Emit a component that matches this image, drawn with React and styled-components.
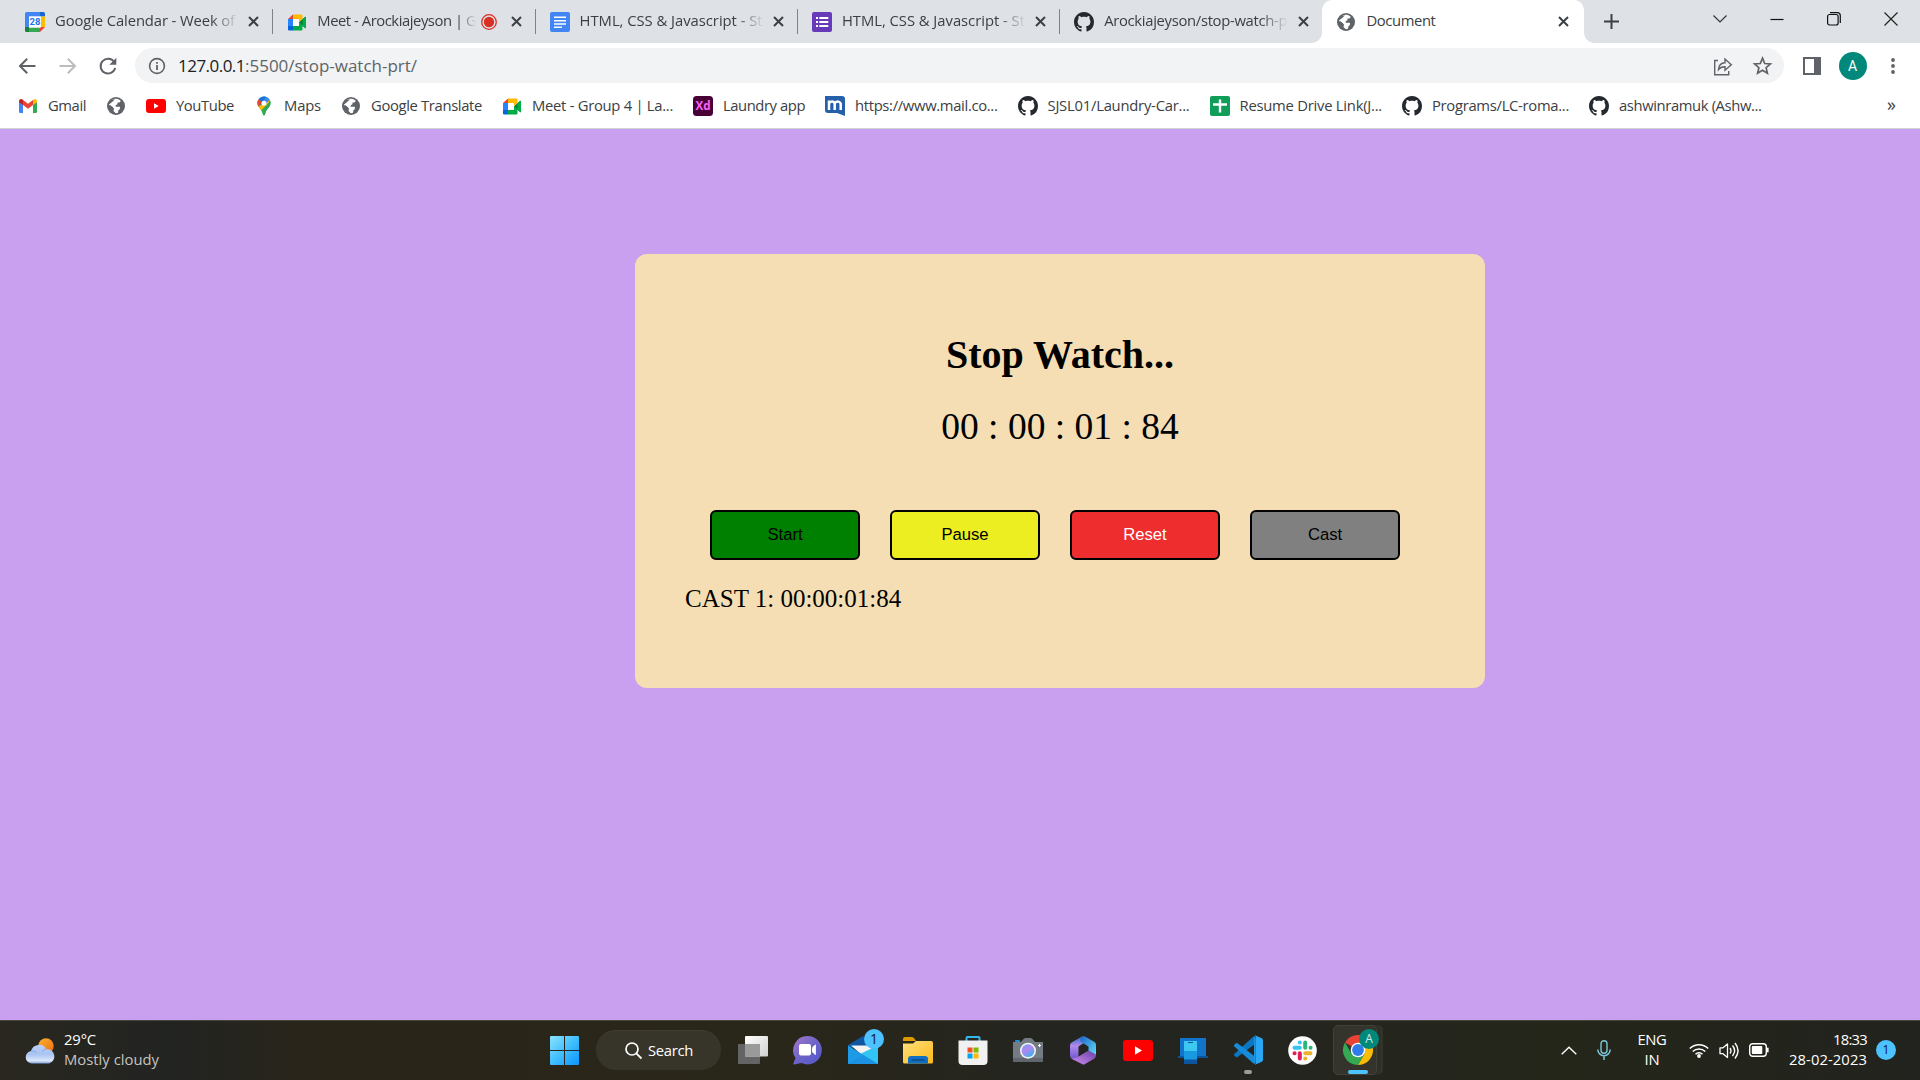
import React, { useLayoutEffect, useRef } from "react";
import styled, { createGlobalStyle } from "styled-components";

const ui = `"Open Sans", "Noto Sans", "Liberation Sans", sans-serif`;

const Global = createGlobalStyle`
  * { box-sizing: border-box; }
  html, body { margin: 0; padding: 0; }
  body { width: 1920px; height: 1080px; overflow: hidden; }
  svg { display: block; flex: none; overflow: visible; }
`;

const Screen = styled.div`
  width: 1920px;
  height: 1080px;
  display: flex;
  flex-direction: column;
  font-family: ${ui};
`;

/* Tracked label: spreads or tightens its letters to a given width. */
const Label = styled.span`
  display: block;
  flex: none;
  white-space: nowrap;
  margin: ${(p) => (p.$size ? "0" : "-1px 0 1px")};
  font-size: ${(p) => p.$size || 14.8}px;
  line-height: 20px;
  color: ${(p) => p.$color || "#3c4043"};
`;

function Fit({ w, children, ...rest }) {
  const ref = useRef(null);
  useLayoutEffect(() => {
    const el = ref.current;
    el.style.width = "max-content";
    const natural = el.getBoundingClientRect().width;
    el.style.letterSpacing = (w - natural) / children.length + "px";
    el.style.width = w + "px";
  }, [w, children]);
  return <Label ref={ref} {...rest}>{children}</Label>;
}

/* ---------- tab strip ---------- */
const TabStrip = styled.div`
  height: 43px;
  background: #dee1e6;
  display: flex;
  padding-left: 11px;
`;

const Tab = styled.div`
  position: relative;
  width: ${(p) => (p.$active ? 262 : 262.3)}px;
  height: 43px;
  padding-left: 14px;
  display: flex;
  align-items: center;
  background: ${(p) => (p.$active ? "#fff" : "transparent")};
  border-radius: 10px 10px 0 0;
  &::before, &::after {
    content: "";
    display: ${(p) => (p.$active ? "block" : "none")};
    position: absolute;
    bottom: 0;
    width: 10px;
    height: 10px;
  }
  &::before { left: -10px; background: radial-gradient(circle at 0 0, transparent 9.5px, #fff 10px); }
  &::after { right: -10px; background: radial-gradient(circle at 100% 0, transparent 9.5px, #fff 10px); }
`;

const TabTitle = styled.div`
  display: flex;
  width: ${(p) => p.$w}px;
  margin-left: 10px;
  margin-top: -2px;
  -webkit-mask-image: ${(p) => (p.$fade ? `linear-gradient(90deg, #000 calc(100% - ${p.$fade}px), transparent)` : "none")};
`;

const TabRight = styled.div`
  flex: 1;
  display: flex;
  align-items: center;
  justify-content: flex-end;
  gap: 14px;
  padding-right: ${(p) => (p.$active ? 15 : 13)}px;
`;

const Divider = styled.div`
  width: 1px;
  height: 25px;
  background: #808387;
`;

const NewTab = styled.div`
  width: 55px;
  display: flex;
  align-items: center;
  justify-content: center;
`;

const WindowControls = styled.div`
  flex: 1;
  height: 37px;
  display: flex;
  justify-content: flex-end;
  align-items: center;
  gap: 43px;
  padding-right: 22px;
`;

/* ---------- toolbar ---------- */
const Toolbar = styled.div`
  height: 45px;
  background: #fff;
  display: flex;
  align-items: center;
  padding-left: 17px;
`;

const NavButtons = styled.div`
  width: 118px;
  display: flex;
  gap: 20.5px;
`;

const Omnibox = styled.div`
  width: 1649px;
  height: 35px;
  border-radius: 18px;
  background: #f1f3f4;
  display: flex;
  align-items: center;
  padding: 0 12px 0 13px;
`;

const Url = styled.div`
  flex: 1;
  display: flex;
  padding-left: 12px;
`;

const OmniActions = styled.div`
  display: flex;
  gap: 20px;
`;

const ToolbarEnd = styled.div`
  display: flex;
  align-items: center;
  padding-left: 19px;
`;

const Avatar = styled.div`
  width: 28px;
  height: 28px;
  margin: 0 24px 0 17.5px;
  border-radius: 50%;
  background: #00897b;
  color: #fff;
  font: 14px/28px Roboto, sans-serif;
  text-align: center;
`;

const Bookmarks = styled.div`
  height: 41px;
  padding: 0 24px 5px 18px;
  background: #fff;
  border-bottom: 1px solid #d0d2d6;
  display: flex;
  align-items: center;
  gap: 20px;
`;

const Bookmark = styled.div`
  display: flex;
  align-items: center;
  gap: 10px;
`;

const More = styled.div`
  margin-left: auto;
  margin-top: -4px;
  font-size: 18px;
  line-height: 18px;
  color: #3c4043;
`;

/* ---------- page ---------- */
const Page = styled.main`
  height: 891px;
  padding: 125px 0 0 635px;
  background: #c9a0ef;
`;

const Card = styled.section`
  width: 850px;
  height: 434px;
  border-radius: 12px;
  padding: 78px 50px 0;
  background: #f5deb3;
  color: #000;
  font-family: "Liberation Serif", serif;
  display: flex;
  flex-direction: column;
`;

const Heading = styled.h1`
  margin: 0;
  font-size: 40px;
  line-height: 46px;
  text-align: center;
`;

const Time = styled.div`
  margin-top: 27px;
  font-size: 37.5px;
  line-height: 44px;
  text-align: center;
`;

const Actions = styled.div`
  display: flex;
  gap: 30px;
  margin: 61px 0 0 25px;
`;

const Action = styled.button`
  width: 150px;
  height: 50px;
  padding: 0;
  border: 2px solid #000;
  border-radius: 6px;
  background: ${(p) => p.$bg};
  color: ${(p) => p.$fg || "#000"};
  font: 16.67px "Liberation Sans", sans-serif;
`;

const Cast = styled.div`
  margin-top: 24px;
  font-size: 25px;
  line-height: 30px;
`;

/* ---------- taskbar ---------- */
const Taskbar = styled.footer`
  height: 60px;
  border-top: 1px solid #48463f;
  background: linear-gradient(90deg, #29271f 0, #222422 170px, #2a2519 330px, #29261a 800px, #242520 1050px, #25251f 1300px, #24261a 1560px, #22231e 1920px);
  display: flex;
  align-items: center;
`;

const Weather = styled.div`
  width: 550px;
  padding-left: 25px;
  display: flex;
  align-items: center;
  gap: 9px;
`;

const Apps = styled.div`
  display: flex;
  align-items: center;
  width: 1005px;
`;

const AppSlot = styled.div`
  position: relative;
  width: 55px;
  height: 59px;
  padding-bottom: 1px;
  display: flex;
  align-items: center;
`;

const Search = styled.div`
  width: 125px;
  height: 40px;
  margin: 0 17px 1px;
  border-radius: 20px;
  background: #37342a;
  border-top: 1px solid #424036;
  display: flex;
  align-items: center;
  gap: 6px;
  padding-left: 29px;
`;

const Badge = styled.div`
  width: 20px;
  height: 20px;
  border-radius: 50%;
  background: ${(p) => p.$bg || "#4cc2ff"};
  color: ${(p) => p.$fg || "#10212b"};
  font-size: ${(p) => p.$size || 12}px;
  line-height: 20px;
  text-align: center;
`;

const OverBadge = styled(Badge)`
  position: absolute;
  left: ${(p) => p.$x}px;
  top: ${(p) => p.$y}px;
`;

const Running = styled.div`
  position: absolute;
  bottom: 6px;
  left: ${(p) => p.$x}px;
  width: ${(p) => p.$w}px;
  height: 4px;
  border-radius: 2px;
  background: ${(p) => p.$bg};
`;

const ActiveSlot = styled.div`
  position: relative;
  width: 44px;
  height: 50px;
  margin-left: -10px;
  border: 1px solid #41413a;
  border-radius: 5px;
  background: #34342d;
  display: flex;
  align-items: center;
  padding-left: 9px;
  box-shadow: 5px 0 0 -0.5px #2f2f29, 6px 0 0 -0.5px #3e3e37;
`;

const Tray = styled.div`
  flex: 1;
  display: flex;
  align-items: center;
`;

const Stack = styled.div`
  display: flex;
  flex-direction: column;
  align-items: ${(p) => p.$align || "flex-start"};
  width: ${(p) => p.$w || "auto"};
  margin-left: ${(p) => p.$ml || 0}px;
  margin-bottom: 1px;
`;

/* ---------- icons ---------- */
const I = ({ w = 20, h, vb, children, ...p }) => (
  <svg width={w} height={h || w} viewBox={vb || `0 0 ${w} ${h || w}`} fill="none" {...p}>{children}</svg>
);

const CalendarIcon = () => (
  <I>
    <path d="M1.5 0H15v4.500H4V15H0V1.5Q0 0 1.5 0Z" fill="#4285f4" />
    <path d="M15 0h3.500Q20 0 20 1.500V4.500h-5Z" fill="#1967d2" />
    <path d="M16 4.500h4V15h-4Z" fill="#fbbc04" />
    <path d="M4 15.500h11V20H4Z" fill="#34a853" />
    <path d="M0 15h4v5H1.500Q0 20 0 18.500Z" fill="#188038" />
    <path d="M15 15h5l-5 5Z" fill="#ea4335" />
    <path d="M4 4.500H16v11H4Z" fill="#fff" />
    <text x="10" y="13.300" textAnchor="middle" fontSize="9.500" fontWeight="700" fontFamily="Roboto, sans-serif" fill="#1a73e8">28</text>
  </I>
);
const MeetIcon = () => (
  <I>
    <path d="M6 2.500h8.300Q15.500 2.500 15.500 3.800V7L12 10V7H6Z" fill="#ffba00" />
    <path d="M6 2.500V7H1Z" fill="#ea4335" />
    <path d="M1 7h5v7H1Z" fill="#2684fc" />
    <path d="M1 14h5v4.500H2.300Q1 18.500 1 17.200Z" fill="#0066da" />
    <path d="M6 14h6v-4l3.500 3v4.200q0 1.300-1.200 1.300H6Z" fill="#00ac47" />
    <path d="M6 7h6v7H6Z" fill="#fff" />
    <path d="M12 10.300 18 5q1-.7 1 .5v10q0 1.200-1 .5Z" fill="#00832d" />
    <path d="M15.500 7.200 18 5q1-.7 1 .5v10q0 1.200-1 .5l-2.500-2.200Z" fill="#00ac47" />
  </I>
);
const RecIcon = () => (
  <I w={16}><circle cx="8" cy="8" r="7.300" stroke="#d93025" strokeWidth="1.300" /><circle cx="8" cy="8" r="5.200" fill="#d93025" /></I>
);
const DocsIcon = () => (
  <I><rect width="20" height="20" rx="2" fill="#4285f4" /><path d="M4 5.200h12M4 8.700h12M4 12h12M4 15.300h8" stroke="#fff" strokeWidth="1.600" /></I>
);
const FormsIcon = () => (
  <I><rect width="20" height="20" rx="2" fill="#673ab7" /><path d="M7.300 6h9M7.300 10h9M7.300 14h9" stroke="#fff" strokeWidth="2" /><path d="M4 6h2M4 10h2M4 14h2" stroke="#fff" strokeWidth="2" /></I>
);
const GithubIcon = () => (
  <I vb="0 0 16 16"><path fill="#24292f" d="M8 0C3.580 0 0 3.580 0 8c0 3.540 2.290 6.530 5.470 7.590.4.070.55-.17.55-.38 0-.19-.01-.82-.01-1.490-2.010.37-2.530-.49-2.690-.94-.09-.23-.48-.94-.82-1.130-.28-.15-.68-.52-.01-.53.630-.01 1.080.58 1.230.82.72 1.210 1.870.87 2.330.66.070-.52.280-.87.510-1.070-1.780-.2-3.640-.89-3.640-3.950 0-.87.310-1.590.82-2.150-.08-.2-.36-1.020.08-2.120 0 0 .67-.21 2.200.82.640-.18 1.320-.27 2-.27s1.360.09 2 .27c1.530-1.040 2.200-.82 2.200-.82.440 1.100.16 1.920.08 2.120.510.56.82 1.270.82 2.150 0 3.070-1.870 3.750-3.650 3.950.29.25.54.73.54 1.480 0 1.070-.01 1.930-.01 2.200 0 .21.150.46.55.38A8.010 8.010 0 0 0 16 8c0-4.420-3.580-8-8-8Z" /></I>
);
const GlobeIcon = () => (
  <I>
    <circle cx="10" cy="10" r="9" fill="#5f6368" />
    <path d="M10.500 2.800c2 .2 3.200 1 4.300 2.200l-1.300 1.500h-2v1.700L9.700 9.300v1.500h4.200v2.200l-1.500 1.300-.4 2.400-1.800.6c-3-.2-5.300-2-6.500-4.300h3.400v-1.400L4.700 9.800 3 9c.3-3.700 3-6.200 7.500-6.200Z" fill="#fff" />
    <path d="M3 8.500 6.700 5.500 9 3.200 5.500 3.800 2.800 6.500ZM4 9l4 3.500-.5 2.500 3 3-4-1-3.500-4Z" fill="#5f6368" />
  </I>
);
const CloseIcon = () => <I w={11}><path d="m1 1 9 9M10 1l-9 9" stroke="#3c4043" strokeWidth="2" /></I>;
const PlusIcon = () => <I w={15}><path d="M7.500 0v15M0 7.500h15" stroke="#3c4043" strokeWidth="2" /></I>;

const BackIcon = ({ c = "#5f6368", flip }) => (
  <I><path transform={flip ? "matrix(-1 0 0 1 20 0)" : undefined} d="M18.500 10H3.500M10.200 2.800 3 10l7.200 7.200" stroke={c} strokeWidth="2" /></I>
);
const ReloadIcon = () => (
  <I><path d="M16.200 6A7.400 7.400 0 1 0 17.200 12" stroke="#5f6368" strokeWidth="2" /><path d="M18.300 1.700v7h-7Z" fill="#5f6368" /></I>
);
const InfoIcon = () => (
  <I w={18}><circle cx="9" cy="9" r="7.400" stroke="#5f6368" strokeWidth="1.600" /><path d="M9 8v5M9 5v1.800" stroke="#5f6368" strokeWidth="1.800" /></I>
);
const ShareIcon = () => (
  <I><path d="M5 4.500H1.700v14.300h14V15M5.500 13.500c.3-4.500 2.500-6.500 6.500-6.700V3l6.300 5.700-6.300 5.500v-3.500c-3-.1-5 .8-6.500 2.800Z" stroke="#5f6368" strokeWidth="1.400" transform="translate(1 0)" /></I>
);
const StarIcon = () => (
  <I><path d="m10 2.200 2.200 5.300 5.700.5-4.300 3.700 1.300 5.600L10 14.300l-4.900 3 1.300-5.600L2.100 8l5.700-.5Z" stroke="#5f6368" strokeWidth="1.700" transform="translate(.5 0)" /></I>
);
const SideIcon = () => (
  <I w={18}><path d="M1 1h16v16H1Z" stroke="#5f6368" strokeWidth="2" /><path d="M11 1h6v16h-6Z" fill="#5f6368" /></I>
);
const DotsIcon = () => (
  <I w={4} h={16}><g fill="#5f6368"><circle cx="2" cy="2" r="1.900" /><circle cx="2" cy="8" r="1.900" /><circle cx="2" cy="14" r="1.900" /></g></I>
);

const GmailIcon = () => (
  <I>
    <path d="M1 5.500v10Q1 17 2.300 17H5V8Z" fill="#4285f4" />
    <path d="M15 8v9h2.700q1.300 0 1.300-1.500v-10Z" fill="#34a853" />
    <path d="M1 5.500C1 3 3 2.400 4.600 3.600L5 4v5L1 6.300Z" fill="#c5221f" />
    <path d="M15 4c2-1.800 4-.7 4 1.500v.8L15 9Z" fill="#fbbc04" />
    <path d="M5 4l5 3.800L15 4v5l-5 3.800L5 9Z" fill="#ea4335" />
  </I>
);
const YoutubeIcon = ({ w = 20, h = 14, vb = "0 0 20 14", r = 3 }) => (
  <I w={w} h={h} vb={vb}><rect width="20" height="14" rx={r} fill="#f00" /><path d="M8 4.200v5.600L12.700 7Z" fill="#fff" /></I>
);
const MapsIcon = () => (
  <I>
    <path d="M10 .5a6.600 6.600 0 0 1 6.600 6.600c0 4.300-4.600 5.600-5.600 11.400q-1 2-2 0C8 13 3.400 11.300 3.400 7.100A6.600 6.600 0 0 1 10 .5Z" fill="#34a853" />
    <path d="M4.700 3.200 8.200 6 4.500 10.700C3.200 8.500 2.800 5.500 4.700 3.200Z" fill="#ea4335" />
    <path d="M4.700 3.200C6.500.7 9.500 0 12.200 1L8 5.900Z" fill="#1a73e8" />
    <path d="M12.200 1c2 .8 3.300 2 4 4L8.500 14 5 11.400Z" fill="#4285f4" />
    <path d="M8 8.800l-3.700 1.800L8 15.500l8-8.500-.7-3-4.200 5Z" fill="#fbbc04" />
    <path d="M16.200 5c1.300 4-1.500 6.200-3.200 8.600-1.200 1.700-1.600 3.200-2 4.900q-1 2-2 0c-.3-1.600-.8-3-1.600-4.200Z" fill="#34a853" />
    <circle cx="10" cy="7.200" r="2.500" fill="#fff" />
  </I>
);
const XdIcon = () => (
  <I><rect width="20" height="20" rx="3.500" fill="#470137" /><text x="10" y="14" textAnchor="middle" fontSize="11.500" fontWeight="700" fontFamily="Open Sans, sans-serif" fill="#ff61f6" textLength="15" lengthAdjust="spacingAndGlyphs">Xd</text></I>
);
const MailComIcon = () => (
  <I>
    <path d="M0 0h17q3 0 3 3v17l-8-3H3q-3 0-3-3Z" fill="#2560a8" />
    <path d="M4 14V4.500M4 7.500q1-2 3-2t2.700 2V14M9.700 7.500q1-2 3-2t3 2V14" stroke="#fff" strokeWidth="2.500" />
  </I>
);
const SheetIcon = () => (
  <I><rect width="20" height="20" rx="2" fill="#0f9d58" /><path d="M10 3.500v13M3 8.500h14" stroke="#fff" strokeWidth="2.400" /></I>
);

const WeatherIcon = () => (
  <I w={30} h={26}>
    <defs>
      <linearGradient id="sun" x1="0" y1="0" x2="1" y2="1"><stop stopColor="#f9b233" /><stop offset="1" stopColor="#ee6c10" /></linearGradient>
      <linearGradient id="cloud" x1="0" y1="0" x2="0" y2="1"><stop stopColor="#b9d0f8" /><stop offset=".5" stopColor="#a9c4f2" /><stop offset=".85" stopColor="#dbe8fb" /><stop offset="1" stopColor="#7fa2dc" /></linearGradient>
    </defs>
    <circle cx="21" cy="8" r="7.700" fill="url(#sun)" />
    <path d="M6.500 25.500a6.300 6.300 0 0 1-.5-12.500 8.300 8.300 0 0 1 15.300-1.800 7.300 7.300 0 0 1 2.700 14.300Z" fill="url(#cloud)" />
    <path d="M6 13q3-.5 5.500 1.500M17 13.500q2-2.400 4.300-2.300" stroke="#86a8e4" strokeWidth="1" />
  </I>
);
const WinIcon = () => (
  <I w={29}>
    <defs><linearGradient id="win" x1="0" y1="0" x2="29" y2="29" gradientUnits="userSpaceOnUse"><stop stopColor="#8be3ff" /><stop offset=".5" stopColor="#41bfff" /><stop offset="1" stopColor="#0a94ff" /></linearGradient></defs>
    <path d="M1 0h13v14H0V1Q0 0 1 0ZM15 0h13q1 0 1 1v13H15ZM0 15h14v14H1q-1 0-1-1ZM15 15h14v13q0 1-1 1H15Z" fill="url(#win)" />
  </I>
);
const SearchIcon = () => <I w={17}><circle cx="7" cy="7" r="6" stroke="#fff" strokeWidth="1.700" /><path d="m11.300 11.300 5.200 5.200" stroke="#fff" strokeWidth="1.900" /></I>;
const TaskViewIcon = () => (
  <I w={30} h={28}>
    <defs><linearGradient id="tv" x1="0" y1="0" x2="1" y2="1"><stop stopColor="#fff" /><stop offset="1" stopColor="#d0d0d0" /></linearGradient></defs>
    <rect y="8" width="22" height="20" rx="1" fill="#646464" />
    <rect x="7" width="23" height="20.500" rx="1" fill="url(#tv)" />
    <path d="M7 8h15v12.500H7Z" fill="#9a9a9a" />
  </I>
);
const ChatIcon = () => (
  <I w={29}>
    <defs><linearGradient id="chat" x1="0" y1="0" x2="1" y2="1"><stop stopColor="#a578c8" /><stop offset=".5" stopColor="#6d64c8" /><stop offset="1" stopColor="#4f57c9" /></linearGradient></defs>
    <path d="M14.500 0a14.200 14.200 0 1 1-6 27L1 28.500q-1 0-.7-1L2.500 22A14.200 14.200 0 0 1 14.500 0Z" fill="url(#chat)" />
    <rect x="6" y="8" width="12" height="11.500" rx="2" fill="#fff" /><path d="M19 12.500q0-.8.6-1.400l2.500-2.300q.8-.6.8.4v9.100q0 1-.8.4l-2.500-2.300q-.6-.6-.6-1.400Z" fill="#fff" />
  </I>
);
const MailIcon = () => (
  <I w={30} h={28}>
    <path d="M0 9 15 0l15 9v3H0Z" fill="#0f559f" />
    <path d="M3 9.500h24L15 20Z" fill="#f4f4f4" />
    <path d="M30 9.500V28H24L13 17.500Z" fill="#32c5f4" />
    <path d="M0 9.500 30 28H0Z" fill="#1e9be6" />
    <path d="M15 19 30 28H0Z" fill="#1b92e2" />
  </I>
);
const FolderIcon = () => (
  <I w={30} h={27}>
    <defs><linearGradient id="fold" x1="0" y1="0" x2="1" y2="1"><stop stopColor="#ffe07a" /><stop offset="1" stopColor="#fbb91c" /></linearGradient></defs>
    <path d="M0 2q0-2 2-2h7q1.500 0 2.300 1.500L13 4H0Z" fill="#dd9b00" />
    <path d="M0 6.500h10L13 4h15q2 0 2 2v19q0 1.500-1.500 1.500h-27Q0 26.500 0 25Z" fill="url(#fold)" />
    <path d="M5 26.500V22q0-3 3-3h14q3 0 3 3v4.500Z" fill="#0f6fc0" /><path d="M8.500 23h13" stroke="#0a3f79" strokeWidth="1.200" />
  </I>
);
const StoreIcon = () => (
  <I w={30} h={29}>
    <path d="M8.500 6V2q0-1 1-1h11q1 0 1 1v4" stroke="#35b7ee" strokeWidth="2" />
    <path d="M.5 4.500h29V25q0 4-4 4h-21q-4 0-4-4Z" fill="#f1f1f1" />
    <path d="M9.500 11.500h5v5h-5Z" fill="#f25022" /><path d="M15.500 11.500h5v5h-5Z" fill="#7fba00" /><path d="M9.500 17.500h5v5h-5Z" fill="#00a4ef" /><path d="M15.500 17.500h5v5h-5Z" fill="#ffb900" />
  </I>
);
const CameraIcon = () => (
  <I w={30} h={24}>
    <defs><linearGradient id="lens" x1="0" y1="0" x2=".7" y2="1"><stop stopColor="#58a6f8" /><stop offset=".45" stopColor="#b586f0" /><stop offset="1" stopColor="#3fb0f2" /></linearGradient></defs>
    <rect x="2" y="2" width="5" height="4" rx="1" fill="#1b8fd2" />
    <path d="M0 4h8l2.500-3q1-1 2-1h5q1 0 2 1L22 4h8v20H0Z" fill="#747b82" />
    <path d="M0 20h30v4H0Z" fill="#5f666d" />
    <circle cx="15" cy="12.700" r="8" fill="#f0f2f4" /><circle cx="15" cy="12.700" r="6.400" fill="url(#lens)" />
    <path d="M26.500 6v3M25 7.500h3" stroke="#fff" strokeWidth="1" />
  </I>
);
const OfficeIcon = () => (
  <I w={30} h={29}>
    <defs>
      <linearGradient id="o1" x1="0" y1="0" x2="0" y2="1"><stop stopColor="#2c6fc4" /><stop offset=".4" stopColor="#b28bea" /><stop offset="1" stopColor="#6a52cc" /></linearGradient>
      <linearGradient id="o2" x1="0" y1="0" x2="1" y2="1"><stop stopColor="#1c64c8" /><stop offset="1" stopColor="#63e0fa" /></linearGradient>
      <linearGradient id="o3" x1="0" y1="1" x2="1" y2="0"><stop stopColor="#cf8ff2" /><stop offset="1" stopColor="#6a3fa6" /></linearGradient>
    </defs>
    <path d="M14 .5 3.500 6.500Q2 7.500 2 9.500v10q0 2 1.500 3l3 1.500 4-3.500V10.500L18 5.500Z" fill="url(#o1)" />
    <path d="M14 .5q1.500-.7 3 0l9.500 5.500Q28 7 28 9v11l-7.500-4.500v-5L13 6Q11 3 14 .5Z" fill="url(#o2)" />
    <path d="M3 22.500q4 .5 7.500-2l10-6L28 18.500q0 3-1.500 4l-9.500 5.500q-1.500 1-3 0Z" fill="url(#o3)" />
  </I>
);
const PhoneIcon = () => (
  <I w={30} h={27}>
    <path d="M2 1h26v19H2Z" fill="#1173c9" /><path d="M0 19h30v1q0 1-1 1H1q-1 0-1-1Z" fill="#0b539a" />
    <path d="M6 4h13v22H6Z" fill="#1a98e0" /><path d="M6 4h13v10H6Z" fill="#3cc8f0" /><path d="M6 22.500h13V27H6Z" fill="#0b569e" /><path d="M10 5.500h5" stroke="#0b539a" />
  </I>
);
const CodeIcon = () => (
  <I w={30} h={30}>
    <path d="M21 1 1.300 19q-.8.8 0 1.500l1.700 1.600q.7.500 1.500 0L22 9Z" fill="#0b76c1" />
    <path d="M21 29 1.300 11.400q-.8-.8 0-1.600L3 8.200q.7-.5 1.500 0L22 21.500Z" fill="#178ad8" />
    <path d="M21.500 0 28.800 3.300Q30 4 30 5.200v19.700q0 1.200-1.200 1.800L21.500 30q1.200-.8 1.200-2.500v-25Q22.700.8 21.500 0Z" fill="#2aa7f3" />
    <path d="m21 1 1.700 2v24L21 29Z" fill="#1f95e2" />
  </I>
);
const SlackIcon = () => (
  <I w={29}>
    <circle cx="14.500" cy="14.500" r="14.300" fill="#fff" />
    <g strokeWidth="4" strokeLinecap="round">
      <path d="M11.800 6.500h.1M6.500 11.800h5.300" stroke="#36c5f0" /><path d="M22.500 11.800h.1M17.200 6.500v5.300" stroke="#2eb67d" />
      <path d="M17.200 22.500h.1M17.200 17.200h5.300" stroke="#ecb22e" /><path d="M6.500 17.200h.1M11.800 17.200v5.300" stroke="#e01e5a" />
    </g>
  </I>
);
const ChromeIcon = () => (
  <I w={30}>
    <path d="M15 15 2 7.500A15 15 0 0 1 28 7.500H15Z" fill="#ea4335" />
    <path d="M15 15V7.500h13A15 15 0 0 1 15 30l6.500-11.200Z" fill="#fbbc05" />
    <path d="M15 15l6.500 3.800L15 30A15 15 0 0 1 2 7.500l6.500 11.300Z" fill="#34a853" />
    <circle cx="15" cy="15" r="7.300" fill="#fff" /><circle cx="15" cy="15" r="5.900" fill="#2f7bea" />
  </I>
);
const Chevron = () => <I w={16} h={9}><path d="m.7 8.300 7.300-7 7.300 7" stroke="#fff" strokeWidth="1.400" /></I>;
const MicIcon = () => <I w={14} h={20}><rect x="4" y=".7" width="6" height="12.500" rx="3" stroke="#7cc6d8" strokeWidth="1.400" /><path d="M.8 9.500a6.200 6.200 0 0 0 12.400 0M7 16v4" stroke="#7cc6d8" strokeWidth="1.500" /></I>;
const WifiIcon = () => (
  <I w={20} h={15}><path d="M.8 5.500a13 13 0 0 1 18.400 0M3.700 8.500a9 9 0 0 1 12.600 0M6.500 11.300a5 5 0 0 1 7 0" stroke="#fff" strokeWidth="1.500" /><circle cx="10" cy="13" r="1.900" fill="#fff" /></I>
);
const VolumeIcon = () => (
  <I w={20} h={17}><path d="M1 5.800h3L8.500 2v13.500L4 11.700H1Z" stroke="#fff" strokeWidth="1.300" strokeLinejoin="round" /><path d="M11 6q2 2.500 0 5.500M13.500 3.500q4.200 5 0 10.500M16 1q6 7.500 0 15.500" stroke="#fff" strokeWidth="1.400" /></I>
);
const BatteryIcon = () => (
  <I w={20} h={14}><rect x=".7" y=".7" width="16.600" height="12.600" rx="3" stroke="#fff" strokeWidth="1.400" /><rect x="2.800" y="3" width="10.500" height="8" rx="1" fill="#fff" /><path d="M18.500 4.700v4.600" stroke="#fff" strokeWidth="2.200" /></I>
);

const tabs = [
  { icon: <CalendarIcon />, title: "Google Calendar - Week of", w: 180 },
  { icon: <MeetIcon />, title: "Meet - Arockiajeyson | G", w: 159, rec: true },
  { icon: <DocsIcon />, title: "HTML, CSS & Javascript - St", w: 183 },
  { icon: <FormsIcon />, title: "HTML, CSS & Javascript - St", w: 183 },
  { icon: <GithubIcon />, title: "Arockiajeyson/stop-watch-p", w: 183 },
  { icon: <GlobeIcon />, title: "Document", w: 69, active: true },
];

const bookmarks = [
  [<GmailIcon />, "Gmail", 38], [<GlobeIcon />], [<YoutubeIcon />, "YouTube", 58], [<MapsIcon />, "Maps", 37],
  [<GlobeIcon />, "Google Translate", 111], [<MeetIcon />, "Meet - Group 4 | La...", 141], [<XdIcon />, "Laundry app", 82],
  [<MailComIcon />, "https://www.mail.co...", 142.5], [<GithubIcon />, "SJSL01/Laundry-Car...", 142],
  [<SheetIcon />, "Resume Drive Link(J...", 142.5], [<GithubIcon />, "Programs/LC-roma...", 137], [<GithubIcon />, "ashwinramuk (Ashw...", 142.5],
];

export default function App() {
  return (
    <>
      <Global />
      <Screen>
        <TabStrip>
          {tabs.map((t, i) => (
            <Tab key={i} $active={t.active}>
              {t.icon}
              <TabTitle $w={t.rec ? 159 : 184} $fade={t.active ? 0 : t.rec ? 18 : 28}><Fit w={t.w}>{t.title}</Fit></TabTitle>
              <TabRight $active={t.active}>{t.rec && <RecIcon />}<CloseIcon /></TabRight>
              {i < 4 && <Divider />}
            </Tab>
          ))}
          <NewTab><PlusIcon /></NewTab>
          <WindowControls>
            <I w={14} h={8}><path d="m.5.500 6.500 6.500 6.500-6.500" stroke="#333" strokeWidth="1.200" /></I>
            <I w={14} h={14}><path d="M.5 7.500h13" stroke="#111" strokeWidth="1.200" /></I>
            <I w={14} h={14}><rect x=".6" y="2.500" width="10.500" height="10.500" rx="2" stroke="#111" strokeWidth="1.200" /><path d="M3 .7h7.300q3 0 3 3V11" stroke="#111" strokeWidth="1.200" /></I>
            <I w={14} h={14}><path d="m.5.500 13 13M13.500.500l-13 13" stroke="#222" strokeWidth="1.200" /></I>
          </WindowControls>
        </TabStrip>

        <Toolbar>
          <NavButtons><BackIcon /><BackIcon flip c="#babcbe" /><ReloadIcon /></NavButtons>
          <Omnibox>
            <InfoIcon />
            <Url>
              <Fit w={67} $size={17} $color="#202124">127.0.0.1</Fit>
              <Fit w={172} $size={17} $color="#5f6368">:5500/stop-watch-prt/</Fit>
            </Url>
            <OmniActions><ShareIcon /><StarIcon /></OmniActions>
          </Omnibox>
          <ToolbarEnd><SideIcon /><Avatar>A</Avatar><DotsIcon /></ToolbarEnd>
        </Toolbar>

        <Bookmarks>
          {bookmarks.map(([icon, text, w], i) => (
            <Bookmark key={i}>{icon}{text && <Fit w={w}>{text}</Fit>}</Bookmark>
          ))}
          <More>»</More>
        </Bookmarks>

        <Page>
          <Card>
            <Heading>Stop Watch...</Heading>
            <Time>00 : 00 : 01 : 84</Time>
            <Actions>
              <Action $bg="#008000">Start</Action>
              <Action $bg="#ecee22">Pause</Action>
              <Action $bg="#ee2d2f" $fg="#fff">Reset</Action>
              <Action $bg="#808080">Cast</Action>
            </Actions>
            <Cast>CAST 1: 00:00:01:84</Cast>
          </Card>
        </Page>

        <Taskbar>
          <Weather>
            <WeatherIcon />
            <Stack>
              <Fit w={32} $color="#fff">29°C</Fit>
              <Fit w={95} $color="#c4c4c0">Mostly cloudy</Fit>
            </Stack>
          </Weather>
          <Apps>
            <WinIcon />
            <Search><SearchIcon /><Fit w={45} $color="#fff">Search</Fit></Search>
            <AppSlot><TaskViewIcon /></AppSlot>
            <AppSlot><ChatIcon /></AppSlot>
            <AppSlot><MailIcon /><OverBadge $x={16} $y={8} $size={14}>1</OverBadge></AppSlot>
            <AppSlot><FolderIcon /></AppSlot>
            <AppSlot><StoreIcon /></AppSlot>
            <AppSlot><CameraIcon /></AppSlot>
            <AppSlot><OfficeIcon /></AppSlot>
            <AppSlot><YoutubeIcon w={30} h={21} r={2} /></AppSlot>
            <AppSlot><PhoneIcon /></AppSlot>
            <AppSlot><CodeIcon /><Running $x={11} $w={8} $bg="#9b9b97" /></AppSlot>
            <AppSlot><SlackIcon /></AppSlot>
            <AppSlot>
              <ActiveSlot><ChromeIcon /></ActiveSlot>
              <OverBadge $x={16} $y={8} $bg="#00897b" $fg="#cfeae6">A</OverBadge>
              <Running $x={5} $w={20} $bg="#4cc2ff" />
            </AppSlot>
          </Apps>
          <Tray>
            <Stack $ml={6}><Chevron /></Stack>
            <Stack $ml={20}><MicIcon /></Stack>
            <Stack $ml={26} $align="center" $w="30px">
              <Fit w={29} $color="#fff">ENG</Fit>
              <Fit w={15} $color="#fff">IN</Fit>
            </Stack>
            <Stack $ml={22}><WifiIcon /></Stack>
            <Stack $ml={10}><VolumeIcon /></Stack>
            <Stack $ml={10}><BatteryIcon /></Stack>
            <Stack $ml={20} $align="flex-end" $w="78px">
              <Fit w={34} $color="#fff">18:33</Fit>
              <Fit w={78} $color="#fff">28-02-2023</Fit>
            </Stack>
            <Stack $ml={9}><Badge>1</Badge></Stack>
          </Tray>
        </Taskbar>
      </Screen>
    </>
  );
}
